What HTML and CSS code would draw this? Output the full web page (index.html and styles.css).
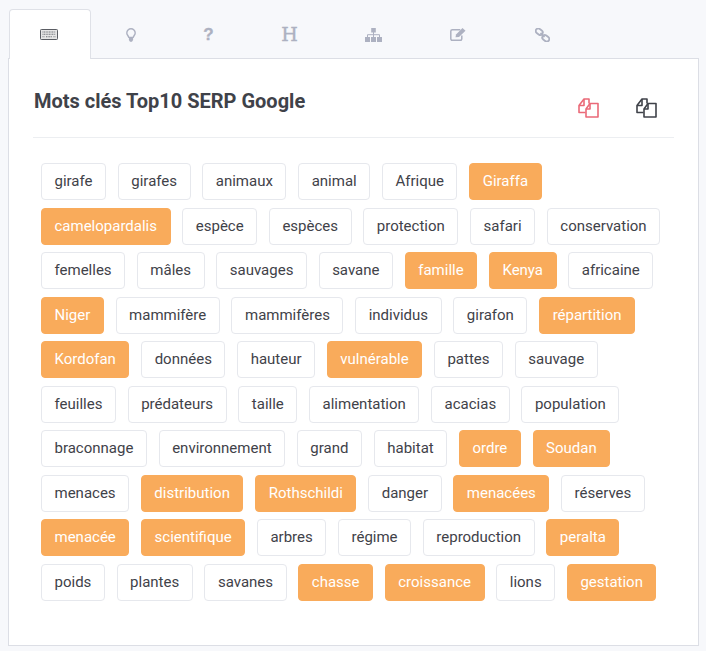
FILE: index.html
```html
<!DOCTYPE html>
<html lang="fr">
<head>
<meta charset="utf-8">
<title>Mots clés Top10 SERP Google</title>
<link rel="stylesheet" href="styles.css">
</head>
<body>
<nav class="tabs">
  <a class="tab tab-active tab-kb"><svg class="ico ico-kb" viewBox="0 0 18 11"><rect x=".5" y=".5" width="17" height="10" rx=".8" fill="#e6e6e6" stroke="#5a5d63"/><path d="M2.500 3h13M2.500 5.200h13M2.500 7.800h2M6 7.800h6M13.500 7.800h2" stroke="#6a6d73" stroke-width="1.100" stroke-dasharray="1 .6"/></svg></a>
  <a class="tab tab-bulb"><svg class="ico ico-bulb" viewBox="0 0 10 14"><path d="M5 .8a4.200 4.200 0 0 1 4.200 4.200c0 1.900-1.600 2.700-2 4.400H2.800C2.400 7.700.8 6.900.8 5A4.200 4.200 0 0 1 5 .8z" fill="none" stroke="#adb1c1" stroke-width="1.400"/><path d="M2.900 9.800h4.200v2.300l-1.100 1.600H4l-1.100-1.600z" fill="#adb1c1"/></svg></a>
  <a class="tab tab-q"><span class="glyph glyph-q">?</span></a>
  <a class="tab tab-h"><span class="glyph glyph-h">H</span></a>
  <a class="tab tab-map"><svg class="ico ico-map" viewBox="0 0 17 14"><path d="M6.200 0h4.600v4.500H6.200zM0 9h5v5H0zM6 9h5v5H6zM12 9h5v5h-5z" fill="#adb1c1"/><path d="M8.500 4v5M2.500 9V6.700h12V9" fill="none" stroke="#adb1c1"/></svg></a>
  <a class="tab tab-edit"><svg class="ico ico-edit" viewBox="0 0 16 13"><path d="M11.800 7.500v3.300a1.500 1.500 0 0 1-1.500 1.500H2.300a1.500 1.500 0 0 1-1.500-1.500V3.300a1.500 1.500 0 0 1 1.500-1.500h8" fill="none" stroke="#adb1c1" stroke-width="1.500"/><path d="M5.500 9.300l.5-2.800L12.500 0 15.500 2.800 9 9z" fill="#adb1c1"/></svg></a>
  <a class="tab tab-link"><svg class="ico ico-link" viewBox="0 0 15 14"><rect x=".5" y="1.200" width="7.500" height="5" rx="2.500" transform="rotate(38 4.200 3.700)" fill="none" stroke="#adb1c1" stroke-width="1.800"/><rect x="7" y="7.800" width="7.500" height="5" rx="2.500" transform="rotate(38 10.800 10.300)" fill="none" stroke="#adb1c1" stroke-width="1.800"/><path d="M5.500 5l4 4" stroke="#adb1c1" stroke-width="1.800"/></svg></a>
</nav>
<main class="card">
  <header class="card-head">
    <h1 class="title">Mots clés Top10 SERP Google</h1>
    <div class="actions">
      <svg class="copy copy-red" viewBox="0 0 21 20"><path d="M7.500 14.500H1V7.500L6 1h5v4.500"/><path d="M6 1v6.500H1"/><path d="M12 5.500h8V19H8v-8z"/><path d="M12 5.500V11H8"/></svg>
      <svg class="copy copy-dark" viewBox="0 0 21 20"><path d="M7.500 14.500H1V7.500L6 1h5v4.500"/><path d="M6 1v6.500H1"/><path d="M12 5.500h8V19H8v-8z"/><path d="M12 5.500V11H8"/></svg>
    </div>
  </header>
  <ul class="tags">
    <li class="tag">girafe</li><li class="tag">girafes</li><li class="tag">animaux</li><li class="tag">animal</li><li class="tag">Afrique</li><li class="tag hot">Giraffa</li>
    <li class="tag hot">camelopardalis</li><li class="tag">espèce</li><li class="tag">espèces</li><li class="tag">protection</li><li class="tag">safari</li><li class="tag">conservation</li>
    <li class="tag">femelles</li><li class="tag">mâles</li><li class="tag">sauvages</li><li class="tag">savane</li><li class="tag hot">famille</li><li class="tag hot">Kenya</li><li class="tag">africaine</li>
    <li class="tag hot">Niger</li><li class="tag">mammifère</li><li class="tag">mammifères</li><li class="tag">individus</li><li class="tag">girafon</li><li class="tag hot">répartition</li>
    <li class="tag hot">Kordofan</li><li class="tag">données</li><li class="tag">hauteur</li><li class="tag hot">vulnérable</li><li class="tag">pattes</li><li class="tag">sauvage</li>
    <li class="tag">feuilles</li><li class="tag">prédateurs</li><li class="tag">taille</li><li class="tag">alimentation</li><li class="tag">acacias</li><li class="tag">population</li>
    <li class="tag">braconnage</li><li class="tag">environnement</li><li class="tag">grand</li><li class="tag">habitat</li><li class="tag hot">ordre</li><li class="tag hot">Soudan</li>
    <li class="tag">menaces</li><li class="tag hot">distribution</li><li class="tag hot">Rothschildi</li><li class="tag">danger</li><li class="tag hot">menacées</li><li class="tag">réserves</li>
    <li class="tag hot">menacée</li><li class="tag hot">scientifique</li><li class="tag">arbres</li><li class="tag">régime</li><li class="tag">reproduction</li><li class="tag hot">peralta</li>
    <li class="tag">poids</li><li class="tag">plantes</li><li class="tag">savanes</li><li class="tag hot">chasse</li><li class="tag hot">croissance</li><li class="tag">lions</li><li class="tag hot">gestation</li>
  </ul>
</main>
</body>
</html>
```

FILE: styles.css
```css
* { box-sizing: border-box; }
html, body { height: 100%; }
body {
  margin: 0;
  padding: 9px 8px 5px;
  background: #f7f8fb;
  font-family: Roboto, "Liberation Sans", sans-serif;
  color: #3f4249;
  overflow: hidden;
}
.tabs {
  display: flex;
  height: 49px;
  margin-left: 1px;
  position: relative;
  z-index: 1;
}
.tab {
  display: flex;
  align-items: center;
  justify-content: center;
  height: 50px;
  border: 1px solid transparent;
  border-bottom: 0;
  border-radius: 4px 4px 0 0;
}
.tab-active {
  background: #fff;
  border-color: #dfe1e7;
}
.tab-kb { width: 82px; padding-right: 3px; }
.tab-bulb { width: 79px; }
.tab-q { width: 77px; }
.tab-h { width: 85px; }
.tab-map { width: 83px; }
.tab-edit { width: 86px; }
.tab-link { width: 83px; }
.ico { display: block; }
.ico-kb { width: 18px; height: 11px; }
.ico-bulb { width: 10px; height: 14px; }
.ico-map { width: 17px; height: 14px; }
.ico-edit { width: 16px; height: 13px; }
.ico-link { width: 15px; height: 14px; }
.glyph { display: block; color: #adb1c1; font-weight: 700; line-height: 1; text-align: center; }
.glyph-q { font-family: "Liberation Sans", sans-serif; font-size: 17px; -webkit-text-stroke: .3px #adb1c1; }
.glyph-h { font-family: "DejaVu Serif", serif; font-size: 19px; font-weight: 400; -webkit-text-stroke: .4px #adb1c1; }
.card {
  height: 588px;
  width: 691px;
  background: #fff;
  border: 1px solid #dcdee5;
  padding: 0 24px;
}
.card-head {
  display: flex;
  align-items: flex-start;
  justify-content: space-between;
  height: 79px;
  border-bottom: 1px solid #eceef1;
}
.title {
  margin: 29px 0 0 1px;
  font-size: 20px;
  line-height: 26px;
  font-weight: 700;
  color: #3f4249;
}
.actions { display: flex; gap: 37px; margin: 39px 17px 0 0; }
.copy { display: block; width: 21px; height: 20px; fill: none; stroke-width: 1.600; stroke-linejoin: round; }
.copy-red { stroke: #ea6a78; }
.copy-dark { stroke: #3f4249; }
.tags {
  display: flex;
  flex-wrap: wrap;
  align-content: flex-start;
  gap: 7.500px 11.750px;
  list-style: none;
  margin: 25px 0 0 8px;
  padding: 0;
  width: 632px;
}
.tag {
  height: 37px;
  padding: 0 12.500px;
  border: 1px solid #e6e8ed;
  border-radius: 4px;
  font-size: 15px;
  line-height: 35px;
  color: #3f4249;
  background: #fff;
}
.hot {
  background: #f9ab5b;
  border-color: #f9ab5b;
  color: #fff;
}
```
